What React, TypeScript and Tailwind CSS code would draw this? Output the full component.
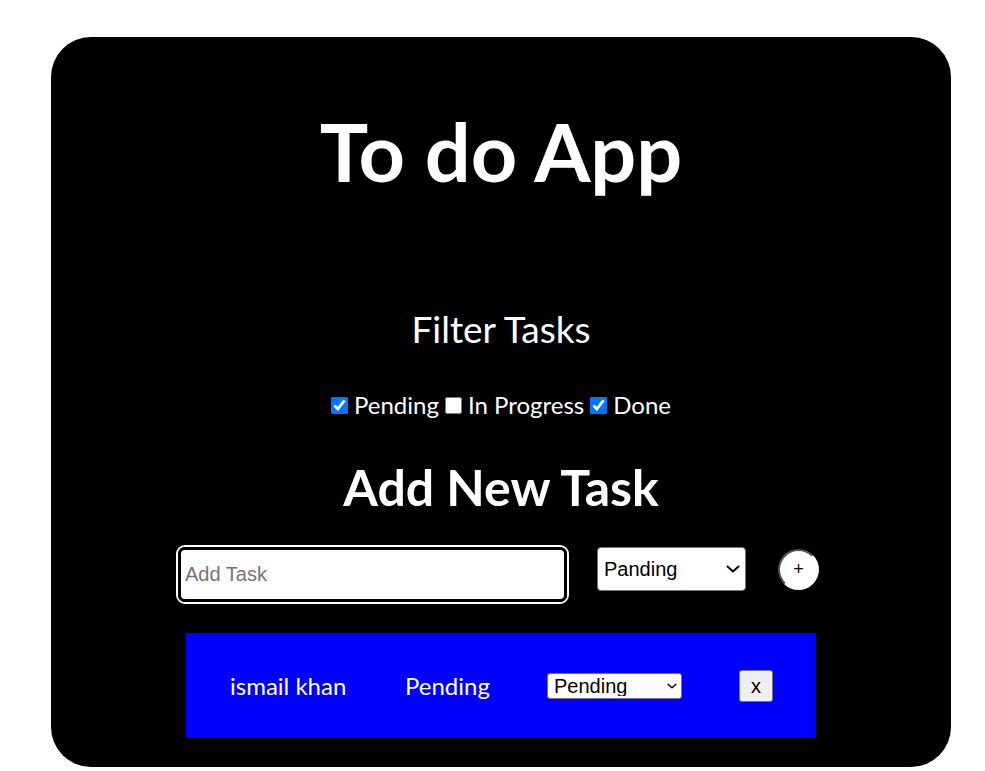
import { useState } from "react";

const ui = { fontFamily: '"Lato", "Noto Sans", sans-serif' };
const arial = { fontFamily: '"Liberation Sans", Arial, sans-serif' };

function Chevron({ className }: { className: string }) {
  return (
    <svg viewBox="0 0 14 8" className={className} fill="none" stroke="currentColor" strokeWidth="2" strokeLinecap="round" strokeLinejoin="round">
      <path d="M1.5 1.5 7 6.5l5.5-5" />
    </svg>
  );
}

export default function App() {
  const [filters, setFilters] = useState({ pending: true, progress: false, done: true });
  const [status, setStatus] = useState("Panding");
  const [rowStatus, setRowStatus] = useState("Pending");

  return (
    <div className="min-h-[771px] w-full bg-white pt-[37px]" style={ui}>
      <div className="ml-[51px] flex h-[730px] w-[900px] flex-col items-center rounded-[40px] bg-black text-white">
        <h1 className="mt-[66px] text-[81px] font-bold leading-[96px]">To do App</h1>

        <h2 className="mt-[107px] text-[37px] leading-[46px]">Filter Tasks</h2>

        <div className="mt-[39px] flex items-center text-[24px] leading-[28px]">
          <input
            type="checkbox"
            className="mr-[6px] h-[17px] w-[17px]"
            checked={filters.pending}
            onChange={() => setFilters({ ...filters, pending: !filters.pending })}
          />
          <span>Pending</span>
          <input
            type="checkbox"
            className="ml-[6px] mr-[6px] h-[17px] w-[17px]"
            checked={filters.progress}
            onChange={() => setFilters({ ...filters, progress: !filters.progress })}
          />
          <span>In Progress</span>
          <input
            type="checkbox"
            className="ml-[6px] mr-[6px] h-[17px] w-[17px]"
            checked={filters.done}
            onChange={() => setFilters({ ...filters, done: !filters.done })}
          />
          <span>Done</span>
        </div>

        <h2 className="mt-[39px] text-[50px] font-bold leading-[58px]">Add New Task</h2>

        <div className="mt-[29px] flex items-start pr-[7px]">
          <div className="rounded-[9px] border-2 border-white">
            <input
              placeholder="Add Task"
              className="block h-[55px] w-[389px] rounded-[7px] border-[3px] border-black bg-white pl-[4px] text-[20px] text-black outline-none placeholder:text-[#757575]"
              style={arial}
            />
          </div>
          <div className="relative ml-[28px] mt-[2px]">
            <select
              value={status}
              onChange={(e) => setStatus(e.target.value)}
              className="block h-[44px] w-[149px] appearance-none rounded-[4px] border border-[#767676] bg-white pl-[6px] text-[20px] text-black"
              style={arial}
            >
              <option>Panding</option>
              <option>In Progress</option>
              <option>Done</option>
            </select>
            <Chevron className="pointer-events-none absolute right-[6px] top-[18px] h-[8px] w-[14px] text-black" />
          </div>
          <button
            className="ml-[32px] mt-[4px] flex h-[41px] w-[41px] items-center justify-center rounded-full border-2 border-b-white border-l-[#555] border-r-white border-t-[#555] bg-white text-[18px] text-black"
            style={arial}
          >
            +
          </button>
        </div>

        <div className="mt-[29px] flex h-[105px] w-[630px] items-center bg-[#0000ff] pl-[44px] text-[24px]">
          <span className="w-[117px] whitespace-nowrap">ismail khan</span>
          <span className="ml-[58px] w-[85px] whitespace-nowrap">Pending</span>
          <div className="relative ml-[57px]">
            <select
              value={rowStatus}
              onChange={(e) => setRowStatus(e.target.value)}
              className="block h-[26px] w-[135px] appearance-none rounded-[3px] border border-[#767676] bg-white pl-[6px] text-[20px] leading-none text-black"
              style={arial}
            >
              <option>Pending</option>
              <option>In Progress</option>
              <option>Done</option>
            </select>
            <Chevron className="pointer-events-none absolute right-[5px] top-[10px] h-[6px] w-[10px] text-black" />
          </div>
          <button
            className="ml-[57px] h-[32px] w-[34px] rounded-[3px] border border-[#767676] bg-[#efefef] text-[20px] text-black"
            style={arial}
          >
            x
          </button>
        </div>
      </div>
    </div>
  );
}
